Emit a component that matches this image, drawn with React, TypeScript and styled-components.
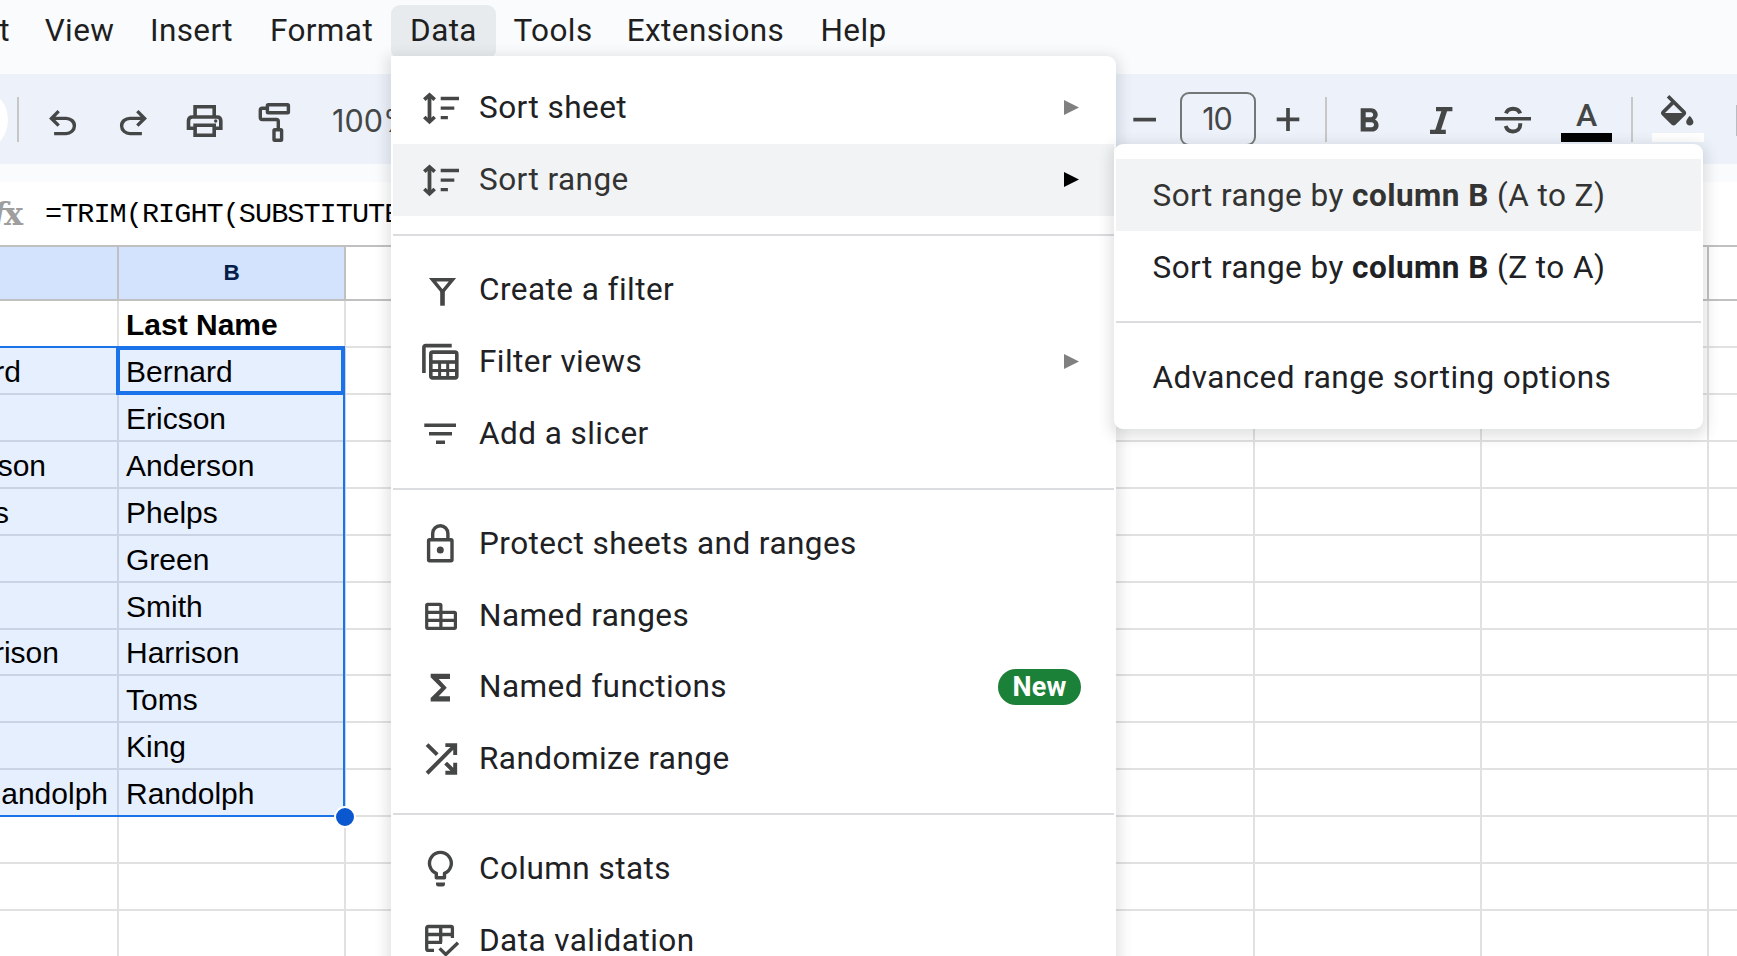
import React, { Component } from 'react';
import styled, { createGlobalStyle } from 'styled-components';
import { MdFormatBold } from 'react-icons/md';

type MenuEntry = {
  label: string,
  icon: string,
  arrow?: boolean,
  badge?: string,
  active?: boolean,
  height?: number,
};

type StateType = {
  openMenu: string,
};

const tabs = [
  { label: 'Edit', width: 85 },
  { label: 'View', width: 103 },
  { label: 'Insert', width: 121 },
  { label: 'Format', width: 139 },
  { label: 'Data', width: 105 },
  { label: 'Tools', width: 114 },
  { label: 'Extensions', width: 191 },
  { label: 'Help', width: 105 },
];

const menuGroups: MenuEntry[][] = [
  [
    { label: 'Sort sheet', icon: 'sort', arrow: true },
    { label: 'Sort range', icon: 'sort', arrow: true, active: true },
  ],
  [
    { label: 'Create a filter', icon: 'filter' },
    { label: 'Filter views', icon: 'views', arrow: true },
    { label: 'Add a slicer', icon: 'slicer' },
  ],
  [
    { label: 'Protect sheets and ranges', icon: 'lock' },
    { label: 'Named ranges', icon: 'ranges' },
    { label: 'Named functions', icon: 'sigma', badge: 'New', height: 71 },
    { label: 'Randomize range', icon: 'shuffle' },
  ],
  [
    { label: 'Column stats', icon: 'bulb' },
    { label: 'Data validation', icon: 'validation' },
  ],
];

// `inset` is how far the overflowing name ends from the right cell edge
const rows = [
  { a: 'rd', inset: 96, b: 'Bernard' },
  { a: '', inset: 0, b: 'Ericson' },
  { a: 'son', inset: 71, b: 'Anderson' },
  { a: 's', inset: 108, b: 'Phelps' },
  { a: '', inset: 0, b: 'Green' },
  { a: '', inset: 0, b: 'Smith' },
  { a: 'rison', inset: 58, b: 'Harrison', height: 46 },
  { a: '', inset: 0, b: 'Toms' },
  { a: '', inset: 0, b: 'King' },
  { a: 'Randolph', inset: 9, b: 'Randolph' },
];

const emptyColumns = [0, 1, 2, 3, 4, 5, 6];

const UNDO = 'M280-200v-80h284q63 0 109.5-40T720-420q0-60-46.5-100T564-560H312l104 104-56 56-200-200 200-200 56 56-104 104h252q97 0 169.5 63T800-420q0 94-72.5 157T564-200H280Z';
const SHUFFLE = 'M560-160v-80h104L537-367l57-57 126 126v-102h80v240H560Zm-344 0-56-56 504-504H560v-80h240v240h-80v-104L216-160Zm151-377L160-744l56-56 207 207-56 56Z';
const BUCKET = 'M16.56 8.94L7.62 0 6.21 1.41l2.38 2.38-5.15 5.15c-.59.59-.59 1.54 0 2.12l5.5 5.5c.29.29.68.44 1.06.44s.77-.15 1.06-.44l5.5-5.5c.59-.58.59-1.53 0-2.12zM5.21 10L10 5.21 14.79 10H5.21zM19 11.5s-2 2.17-2 3.5c0 1.1.9 2 2 2s2-.9 2-2c0-1.33-2-3.5-2-3.5z';

const icons: { [key: string]: React.ReactNode } = {
  sort: (
    <g strokeWidth="3.3">
      <path d="M9.5 7v26.6" strokeWidth="3.8" />
      <path d="M4.3 11.7l5.2-4.8 5.2 4.8M4.3 29l5.2 4.8 5.2-4.8" strokeWidth="3.7" />
      <path d="M20.7 10.5H39M20.7 20.2h13.6M20.7 29.7h7.2" />
    </g>
  ),
  filter: (
    <g strokeWidth="3.4">
      <path d="M12.5 9.7h20L22.5 21.8z" />
      <path d="M22.5 21v14.7" strokeWidth="4.6" />
    </g>
  ),
  views: (
    <g strokeWidth="3.6">
      <path d="M3.9 31V5.6q0-2 2-2h25.8" />
      <rect x="10.8" y="10.1" width="26" height="25.8" rx="1.8" />
      <path d="M10.8 20h26" />
      <path d="M10.8 28.5h26M19.6 20v16M27.7 20v16" strokeWidth="3" />
    </g>
  ),
  slicer: <path strokeWidth="3.4" d="M4.3 11.3H36M9 19.7h23M16 28.3h9" />,
  lock: (
    <g strokeWidth="3.4">
      <rect x="8.6" y="15.7" width="23.4" height="21" rx="1" />
      <path d="M12.7 15.5V9.4a7.6 7.6 0 0 1 15.2 0v6.1" />
      <circle cx="20.3" cy="26" r="3.5" fill="currentColor" stroke="none" />
    </g>
  ),
  ranges: (
    <g strokeWidth="3.2">
      <path d="M7.7 8.3h12.2q1 0 1 1v7h13.5q1 0 1 1v14q0 1-1 1H7.7q-1 0-1-1v-22q0-1 1-1z" />
      <path d="M20.9 16v16.4M6.7 16.3h14.2M6.7 24.3h28.7" />
    </g>
  ),
  sigma: (
    <path
      fill="currentColor"
      stroke="none"
      transform="translate(1 -1.1) scale(1.61 1.73)"
      d="M18 4H6v2l6.5 6L6 18v2h12v-3h-7l5-5-5-5h7z"
    />
  ),
  shuffle: (
    <path
      fill="currentColor"
      stroke="none"
      transform="translate(-2.2 43.5) scale(0.0492)"
      d={SHUFFLE}
    />
  ),
  bulb: (
    <g strokeWidth="3.4">
      <path d="M16.3 28.7v-4.3a10.9 10.9 0 1 1 8.2 0v4.3z" strokeLinejoin="round" />
      <path d="M16 33.4h9v1.8q0 2.4-2.4 2.4h-4.2q-2.4 0-2.4-2.4z" fill="currentColor" stroke="none" />
    </g>
  ),
  validation: (
    <g strokeWidth="3.3">
      <path d="M14 29.4H8.2q-1.5 0-1.5-1.5V7q0-1.5 1.5-1.5h22.7q1.5 0 1.5 1.5v10" />
      <path d="M6.7 13.5h25.7M6.7 21.4H22M20.7 5.5v15.9" />
      <path d="M19.6 27.3l6.2 6.2L38 21.7" />
    </g>
  ),
  undo: (
    <path
      fill="currentColor"
      stroke="none"
      transform="translate(0.3 42.7) scale(0.0422)"
      d={UNDO}
    />
  ),
  redo: (
    <path
      fill="currentColor"
      stroke="none"
      transform="translate(40.7 42.7) scale(-0.0422 0.0422)"
      d={UNDO}
    />
  ),
  print: (
    <g strokeWidth="3.6">
      <path d="M11.1 15V5.8h19.1V15" />
      <path d="M10 27.3H4.5v-7.5q0-3.8 3.8-3.8H33q3.8 0 3.8 3.8v7.5h-5.5" />
      <path d="M11.1 24.2h19.1v10H11.1z" />
      <circle cx="31.7" cy="20" r="1.7" fill="currentColor" stroke="none" />
    </g>
  ),
  roller: (
    <g strokeWidth="3.4">
      <rect x="13.4" y="3.8" width="21" height="7.9" rx="0.8" />
      <path d="M12.5 7.3H8.3q-2 0-2 2v7.2q0 2 2 2h14q2 0 2 2v7" />
      <rect x="20" y="28.7" width="7.6" height="10.5" rx="0.8" />
    </g>
  ),
  minus: <path strokeWidth="3.7" d="M8.3 18.6H31" />,
  plus: <path strokeWidth="3.7" d="M8.7 18.4h22.6M20 7v23" />,
  italic: (
    <g>
      <path strokeWidth="4.2" d="M15 8.2h16.4M9 30.8h15.8" />
      <path strokeWidth="5.4" d="M23.9 8.2l-7.4 22.6" />
    </g>
  ),
  strike: (
    <g>
      <path strokeWidth="3.6" d="M2 17.7h36" />
      <path strokeWidth="4" d="M13 12.4c1-3 3.7-4.7 7-4.7s6.2 1.8 7.2 4.7" />
      <path strokeWidth="4" d="M27.2 22.3v1.5c0 4-3 6.7-7.2 6.7-3.6 0-6.2-1.9-7.3-5.5" />
    </g>
  ),
  bucket: (
    <path
      fill="currentColor"
      stroke="none"
      transform="translate(-2.4 0) scale(1.8)"
      d={BUCKET}
    />
  ),
};

export default class App extends Component<{}, StateType> {
  state = {
    openMenu: 'Data',
  };

  renderIcon = (name: string) => {
    return <Icon viewBox="0 0 40 40">{icons[name]}</Icon>;
  }

  renderToolbar = () => {
    return (
      <Toolbar>
        <SearchPill />
        <Separator gap={9} />
        <Tool gap={23}>{this.renderIcon('undo')}</Tool>
        <Tool gap={31}>{this.renderIcon('redo')}</Tool>
        <Tool gap={31}>{this.renderIcon('print')}</Tool>
        <Tool gap={30}>{this.renderIcon('roller')}</Tool>
        <Zoom>100%</Zoom>
        <Tool gap={0}>{this.renderIcon('minus')}</Tool>
        <FontSize>10</FontSize>
        <Tool gap={12}>{this.renderIcon('plus')}</Tool>
        <Separator gap={17} />
        <Tool gap={22}><MdFormatBold size={41} /></Tool>
        <Tool gap={32}>{this.renderIcon('italic')}</Tool>
        <Tool gap={32}>{this.renderIcon('strike')}</Tool>
        <Swatch gap={28} width={51} color="#000000">
          <TextGlyph>A</TextGlyph>
        </Swatch>
        <Separator gap={19} />
        <Swatch gap={19} width={52} color="#ffffff">{this.renderIcon('bucket')}</Swatch>
        <ToolEdge />
      </Toolbar>
    );
  }

  renderSheet = () => {
    return (
      <Sheet>
        <Row height={54}>
          <HeaderCell selected={true} />
          <HeaderCell selected={true}>B</HeaderCell>
          {emptyColumns.map((i: number) => <HeaderCell key={i} selected={false} />)}
        </Row>
        <Row height={47}>
          <Cell />
          <Cell bold={true}>Last Name</Cell>
          {emptyColumns.map((i: number) => <Cell key={i} />)}
        </Row>
        <Selection>
          {rows.map((row, i: number) => {
            return (
              <Row key={i} height={row.height || 47}>
                <OverflowCell selected={true} inset={row.inset}>{row.a}</OverflowCell>
                <Cell selected={true}>{row.b}</Cell>
                {emptyColumns.map((j: number) => <Cell key={j} />)}
              </Row>
            );
          })}
          <SelectionBorder />
          <ActiveCell />
          <FillHandle />
        </Selection>
        {[0, 1, 2].map((i: number) => {
          return (
            <Row key={i} height={47}>
              <Cell />
              <Cell />
              {emptyColumns.map((j: number) => <Cell key={j} />)}
            </Row>
          );
        })}
      </Sheet>
    );
  }

  renderArrow = () => {
    return (
      <Arrow viewBox="0 0 15 15">
        <path d="M0 0L15 7.5 0 15z" />
      </Arrow>
    );
  }

  renderDataMenu = () => {
    return (
      <DataMenu>
        {menuGroups.map((group: MenuEntry[], i: number) => {
          return (
            <MenuGroup key={i}>
              {group.map((item: MenuEntry) => {
                return (
                  <MenuItem key={item.label} active={item.active} height={item.height}>
                    {this.renderIcon(item.icon)}
                    <MenuLabel>{item.label}</MenuLabel>
                    {item.badge && <Badge>{item.badge}</Badge>}
                    {item.arrow && this.renderArrow()}
                  </MenuItem>
                );
              })}
            </MenuGroup>
          );
        })}
      </DataMenu>
    );
  }

  renderSubMenu = () => {
    return (
      <SubMenu>
        <MenuGroup>
          <SubMenuItem active={true}>Sort range by <b>column B</b> (A to Z)</SubMenuItem>
          <SubMenuItem>Sort range by <b>column B</b> (Z to A)</SubMenuItem>
        </MenuGroup>
        <MenuGroup>
          <SubMenuItem>Advanced range sorting options</SubMenuItem>
        </MenuGroup>
      </SubMenu>
    );
  }

  render() {
    let { openMenu } = this.state;
    return (
      <StyledApp>
        <GlobalStyle />
        <MenuBar>
          {tabs.map((tab) => {
            return (
              <Tab
                key={tab.label}
                width={tab.width}
                open={tab.label === openMenu}
                onClick={() => this.setState({ openMenu: tab.label })}
              >
                {tab.label}
              </Tab>
            );
          })}
        </MenuBar>
        {this.renderToolbar()}
        <FormulaBar>
          <Fx><i>f</i>x</Fx>
          <Formula>=TRIM(RIGHT(SUBSTITUTE</Formula>
        </FormulaBar>
        {this.renderSheet()}
        {openMenu === 'Data' && this.renderDataMenu()}
        {openMenu === 'Data' && this.renderSubMenu()}
      </StyledApp>
    );
  }
}

const GlobalStyle = createGlobalStyle`
  * {
    box-sizing: border-box;
  }

  body {
    margin: 0;
    overflow: hidden;
  }
`;

const StyledApp = styled.div`
  position: relative;
  width: 1737px;
  height: 956px;
  overflow: hidden;
  background: #f9fbfd;
  font-family: Roboto, sans-serif;
  white-space: nowrap;
`;

const MenuBar = styled.div`
  display: flex;
  height: 74px;
  padding-top: 5px;
  margin-left: -60px;
`;

const Tab = styled.div<{ width: number, open: boolean }>`
  flex: none;
  display: flex;
  justify-content: center;
  width: ${props => props.width}px;
  height: 54px;
  line-height: 52px;
  font-size: 31.5px;
  letter-spacing: 0.4px;
  color: #1f1f1f;
  border-radius: 9px;
  cursor: pointer;
  background: ${props => props.open ? '#e7ebee' : ''};

  &:first-child {
    margin-right: 3px;
  }
`;

const Toolbar = styled.div`
  display: flex;
  align-items: flex-start;
  height: 90px;
  padding-top: 23px;
  background: #ecf1fa;
  color: #444746;
`;

const SearchPill = styled.div`
  flex: none;
  width: 66px;
  height: 66px;
  margin-top: -10px;
  margin-left: -58px;
  border-radius: 33px;
  background: #ffffff;
`;

const Separator = styled.div<{ gap: number }>`
  flex: none;
  width: 2px;
  height: 45px;
  margin-left: ${props => props.gap}px;
  background: #c7c7c7;
`;

const Tool = styled.div<{ gap: number }>`
  flex: none;
  display: flex;
  width: 40px;
  height: 40px;
  margin-top: 4px;
  margin-left: ${props => props.gap}px;
`;

const Icon = styled.svg`
  flex: none;
  width: 40px;
  height: 40px;
  overflow: visible;
  fill: none;
  stroke: currentColor;
  color: #444746;
`;

const Zoom = styled.div`
  flex: none;
  width: 831px;
  padding-left: 38px;
  font-family: Inter, sans-serif;
  font-size: 30.5px;
  line-height: 48px;
`;

const FontSize = styled.div`
  flex: none;
  width: 76px;
  height: 54px;
  margin-top: -5px;
  margin-left: 15px;
  padding-right: 2px;
  border: 2px solid #747775;
  border-radius: 9px;
  text-align: center;
  font-family: Inter, sans-serif;
  font-size: 30.5px;
  letter-spacing: -1px;
  line-height: 50px;
`;

const Swatch = styled.div<{ gap: number, width: number, color: string }>`
  flex: none;
  display: flex;
  justify-content: center;
  width: ${props => props.width}px;
  height: 47px;
  margin-top: -2px;
  margin-left: ${props => props.gap}px;
  border-bottom: 9px solid ${props => props.color};
`;

const TextGlyph = styled.div`
  font-size: 32px;
  font-weight: 500;
  line-height: 40px;
`;

const ToolEdge = styled.div`
  flex: none;
  width: 2px;
  height: 31px;
  margin-top: 8px;
  margin-left: 32px;
  background: #b9bcc2;
`;

const FormulaBar = styled.div`
  display: flex;
  height: 83px;
  border-top: 18px solid #f9fbfd;
  border-bottom: 2px solid #c0c0c0;
  background: #ffffff;
`;

const Fx = styled.div`
  flex: none;
  display: flex;
  justify-content: flex-end;
  width: 23px;
  font-family: 'DejaVu Serif', serif;
  font-size: 32px;
  font-weight: 700;
  line-height: 64px;
  color: #9e9e9e;

  > i {
    margin-right: -2px;
  }
`;

const Formula = styled.div`
  margin-left: 22px;
  font-family: 'Liberation Mono', monospace;
  font-size: 28.5px;
  letter-spacing: -0.95px;
  line-height: 66px;
  color: #000000;
`;

const Sheet = styled.div`
  background: #ffffff;
`;

const Row = styled.div<{ height: number }>`
  display: grid;
  grid-template-columns: 119px 227px 227px 227px 227px 228px 227px 227px 32px;
  grid-template-rows: 100%;
  height: ${props => props.height}px;
  line-height: ${props => props.height}px;
`;

const HeaderCell = styled.div<{ selected: boolean }>`
  display: flex;
  align-items: center;
  justify-content: center;
  border-right: 2px solid #c0c0c0;
  border-bottom: 2px solid #c0c0c0;
  font-family: 'Liberation Sans', sans-serif;
  font-size: 22.5px;
  font-weight: 700;
  line-height: 26px;
  color: #041e49;
  background: ${props => props.selected ? '#d3e3fd' : '#ffffff'};
`;

const Cell = styled.div<{ selected?: boolean, bold?: boolean }>`
  overflow: hidden;
  padding-left: 7px;
  border-right: 2px solid ${props => props.selected ? '#c9d3e3' : '#e1e1e1'};
  border-bottom: 2px solid ${props => props.selected ? '#c9d3e3' : '#e1e1e1'};
  background: ${props => props.selected ? '#e6effd' : '#ffffff'};
  font-family: 'Liberation Sans', sans-serif;
  font-size: 30px;
  font-weight: ${props => props.bold ? 700 : 400};
  color: #000000;
`;

const OverflowCell = styled(Cell)<{ inset: number }>`
  display: flex;
  justify-content: flex-end;
  padding-left: 0;
  padding-right: ${props => props.inset}px;
`;

const Selection = styled.div`
  position: relative;
`;

const SelectionBorder = styled.div`
  position: absolute;
  top: -2px;
  left: -2px;
  width: 347px;
  height: 471px;
  border: 2px solid #1a73e8;
`;

const ActiveCell = styled.div`
  position: absolute;
  top: -2px;
  left: 116px;
  width: 229px;
  height: 49px;
  border: 4px solid #1a73e8;
`;

const FillHandle = styled.div`
  position: absolute;
  left: 334px;
  bottom: -11px;
  width: 22px;
  height: 22px;
  border: 2px solid #ffffff;
  border-radius: 50%;
  background: #0b57d0;
`;

const Menu = styled.div`
  position: absolute;
  background: #ffffff;
  color: #202124;
  font-size: 31.5px;
  letter-spacing: 0.45px;
  box-shadow: 0 4px 13px 4px rgba(60, 64, 67, 0.15);
`;

const DataMenu = styled(Menu)`
  top: 56px;
  left: 391px;
  width: 725px;
  padding: 16px 2px;
  border-radius: 0 9px 9px 9px;
`;

const SubMenu = styled(Menu)`
  top: 144px;
  left: 1114px;
  width: 589px;
  padding: 15px 2px 16px;
  border-radius: 9px;
`;

const MenuGroup = styled.div`
  & + & {
    margin-top: 18px;
    padding-top: 18px;
    border-top: 2px solid #dadce0;
  }
`;

const MenuItem = styled.div<{ active?: boolean, height?: number }>`
  display: flex;
  align-items: center;
  height: ${props => props.height || 72}px;
  padding-left: 27px;
  padding-right: 35px;
  cursor: pointer;
  color: ${props => props.active ? '#333333' : '#202124'};
  background: ${props => props.active ? '#f1f3f4' : ''};

  > svg:last-child {
    fill: ${props => props.active ? '#000000' : '#808080'};
  }
`;

const MenuLabel = styled.div`
  flex: 1;
  margin-left: 19px;
  padding-bottom: 2px;
`;

const Arrow = styled.svg`
  width: 15px;
  height: 15px;
  margin-bottom: 1px;
`;

const Badge = styled.div`
  width: 83px;
  height: 36px;
  margin-right: -2px;
  margin-bottom: 1px;
  border-radius: 18px;
  text-align: center;
  font-size: 27px;
  font-weight: 700;
  letter-spacing: 0.2px;
  line-height: 37px;
  color: #ffffff;
  background: #1b8038;
`;

const SubMenuItem = styled.div<{ active?: boolean }>`
  height: 72px;
  padding-top: 1px;
  padding-left: 36.5px;
  line-height: 72px;
  cursor: pointer;
  color: ${props => props.active ? '#333333' : '#202124'};
  background: ${props => props.active ? '#f1f3f4' : ''};
`;
